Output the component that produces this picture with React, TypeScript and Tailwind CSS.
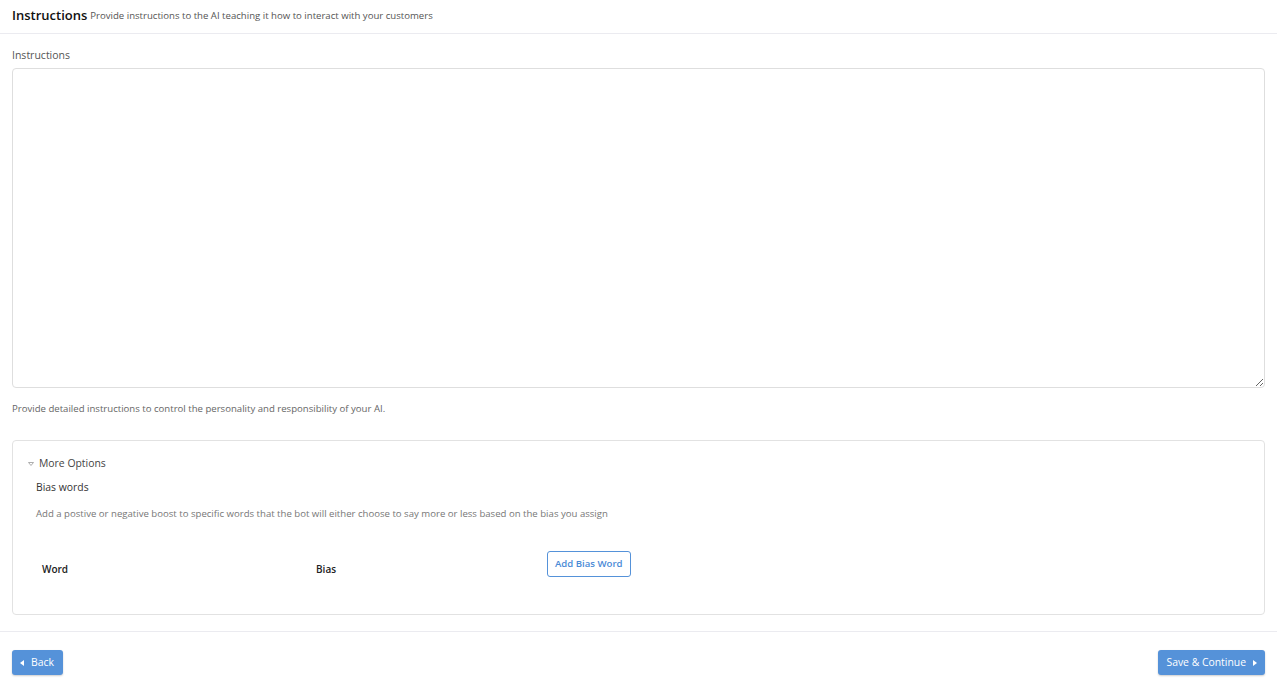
import React from "react";

export default function App() {
  return (
    <div className="w-[1277px] h-[689px] bg-white text-[#333] flex flex-col" style={{ fontFamily: '"Open Sans", "Noto Sans", sans-serif' }}>
      <div className="h-[34px] border-b border-[#ebebf0] px-3 flex items-center pb-[1px]">
        <span className="text-[13px] font-semibold text-[#111]">Instructions</span>
        <span className="text-[9.6px] text-[#555] ml-[3px] mt-[1px]">Provide instructions to the AI teaching it how to interact with your customers</span>
      </div>
      <div className="flex-1 px-3 pt-[13px]">
        <div className="text-[10.5px] text-[#555] leading-[16px]">Instructions</div>
        <textarea className="mt-[5px] block w-full h-[320px] border border-[#dedede] rounded-[4px] resize-y" />
        <div className="text-[9.6px] text-[#666] mt-[14px] leading-[14px]">Provide detailed instructions to control the personality and responsibility of your AI.</div>
        <div className="mt-[24px] h-[175px] border border-[#e2e2e2] rounded-[4px] pl-[14px] pt-[14px]">
          <div className="flex items-center text-[10.4px] text-[#444] leading-[16px]">
            <svg width="8" height="6" viewBox="0 0 8 6" className="mr-[4px] mt-[1px]"><path d="M1.5 1.5 L6.5 1.5 L4 4.5 Z" fill="none" stroke="#999" strokeWidth="0.8" strokeLinejoin="round" /></svg>
            More Options
          </div>
          <div className="pl-[9px]">
            <div className="text-[10.4px] text-[#333] mt-[8px] leading-[16px]">Bias words</div>
            <div className="text-[9.6px] text-[#777] mt-[12px] leading-[14px]">Add a postive or negative boost to specific words that the bot will either choose to say more or less based on the bias you assign</div>
            <div className="flex items-start mt-[30px]">
              <div className="w-[280px] pl-[6px] pt-[11px] text-[10px] font-semibold text-[#222]">Word</div>
              <div className="w-[231px] pt-[11px] text-[10px] font-semibold text-[#222]">Bias</div>
              <button className="h-[26px] px-[7px] border border-[#5592d9] rounded-[3px] text-[9.6px] font-semibold text-[#4a8ad6] bg-white">Add Bias Word</button>
            </div>
          </div>
        </div>
      </div>
      <div className="h-[58px] border-t border-[#ebebf0] px-3 flex items-start justify-between pt-[18px]">
        <button className="h-[25px] pl-[8px] pr-[9px] rounded-[3px] bg-[#5592d9] text-white text-[10.4px] flex items-center gap-[7px] shadow-[0_1px_2px_rgba(0,0,0,0.2)]">
          <svg width="4" height="6" viewBox="0 0 4 6"><path d="M4 0 L0 3 L4 6 Z" fill="white" /></svg>
          Back
        </button>
        <button className="h-[25px] pl-[8px] pr-[8px] rounded-[3px] bg-[#5592d9] text-white text-[10.4px] flex items-center gap-[7px] shadow-[0_1px_2px_rgba(0,0,0,0.2)]">
          Save &amp; Continue
          <svg width="4" height="6" viewBox="0 0 4 6"><path d="M0 0 L4 3 L0 6 Z" fill="white" /></svg>
        </button>
      </div>
    </div>
  );
}
